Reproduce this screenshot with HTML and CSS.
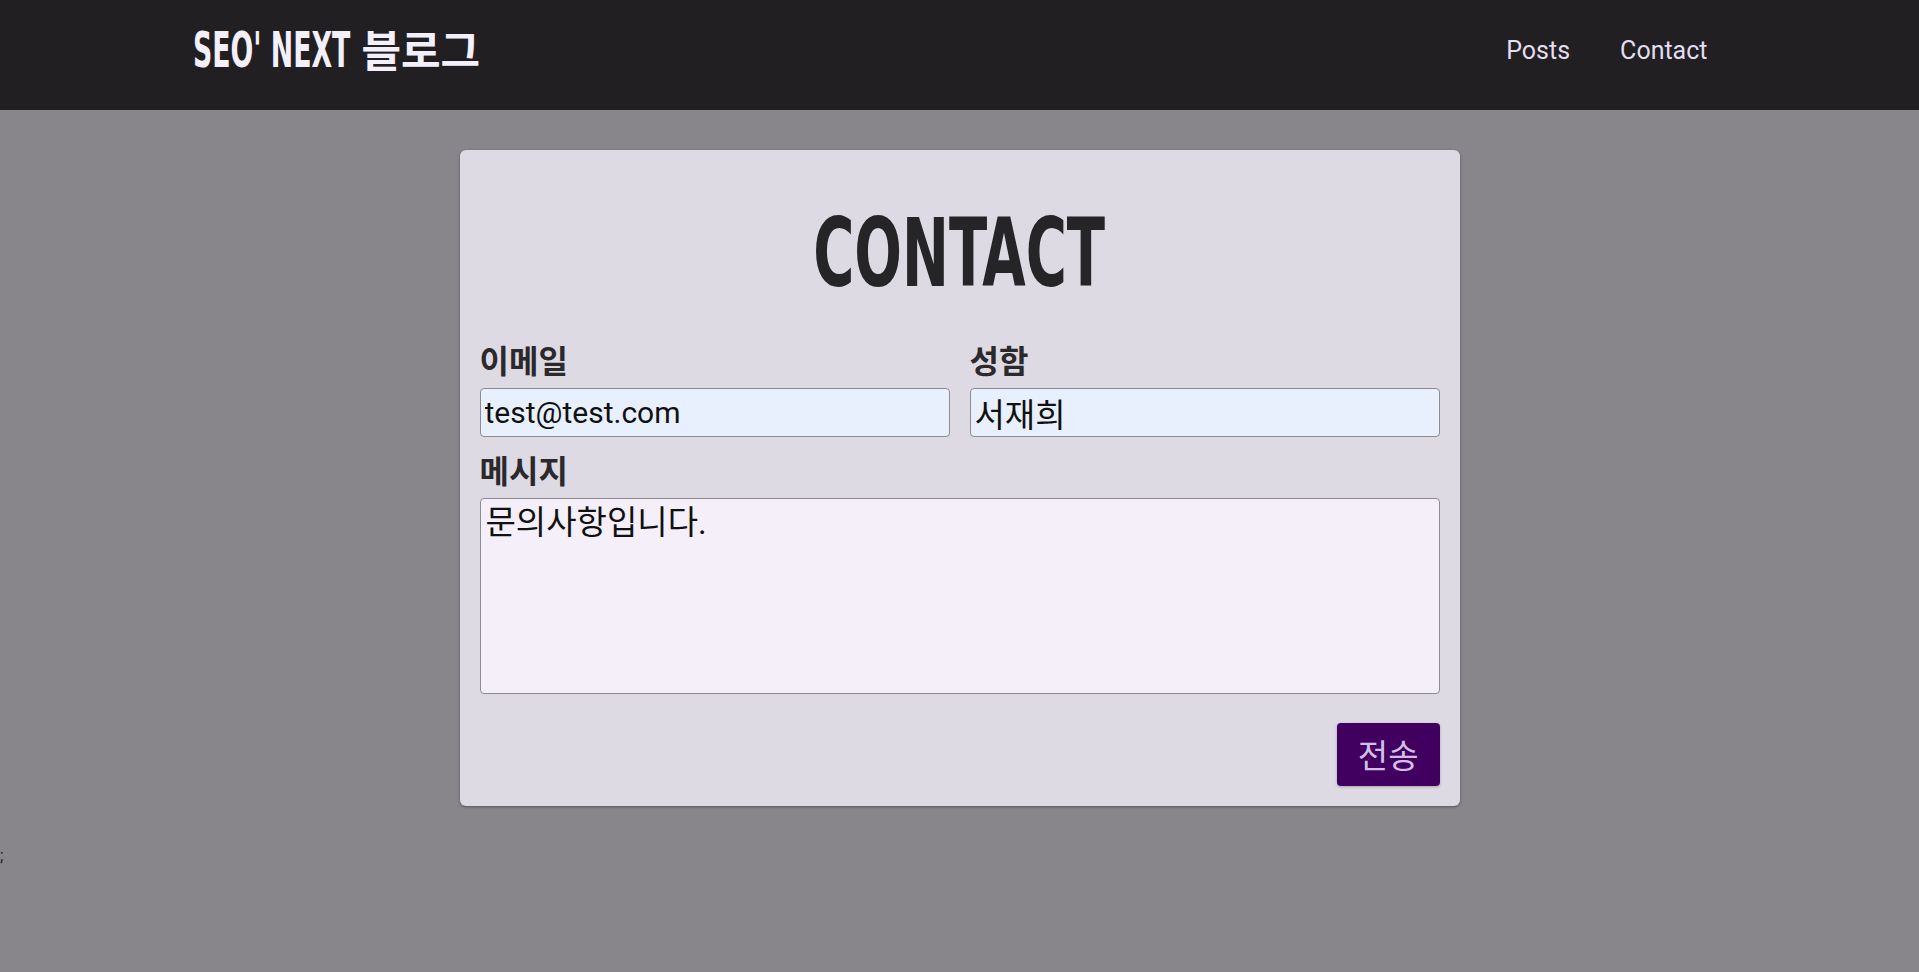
FILE: index.html
```html
<!DOCTYPE html>
<html lang="ko">
<head>
<meta charset="utf-8">
<title>Contact</title>
<link rel="stylesheet" href="styles.css">
</head>
<body>
<header class="site-header">
  <div class="header-inner">
    <a class="logo" href="#"><span class="logo-latin">SEO' NEXT</span><span class="logo-ko">블로그</span></a>
    <nav class="nav">
      <a class="nav-link" href="#">Posts</a>
      <a class="nav-link" href="#">Contact</a>
    </nav>
  </div>
</header>
<main class="main">
  <section class="card">
    <h1 class="title"><span class="title-text">CONTACT</span></h1>
    <form class="form">
      <div class="row">
        <div class="field">
          <label class="label" for="email">이메일</label>
          <input class="input" id="email" type="email" value="test@test.com">
        </div>
        <div class="field">
          <label class="label" for="name">성함</label>
          <input class="input input-ko" id="name" type="text" value="서재희">
        </div>
      </div>
      <div class="field">
        <label class="label" for="message">메시지</label>
        <textarea class="textarea" id="message">문의사항입니다.</textarea>
      </div>
      <div class="actions">
        <button class="button" type="button">전송</button>
      </div>
    </form>
  </section>
</main>
<div class="stray">;</div>
</body>
</html>
```
FILE: styles.css
```css
* { box-sizing: border-box; }
html, body { margin: 0; padding: 0; }
body {
  background: #88858b;
  font-family: Roboto, "Noto Sans CJK KR", sans-serif;
  color: #1f1d20;
  min-height: 972px;
}
.site-header {
  background: #211f22;
  height: 110px;
}
.header-inner {
  max-width: 1536px;
  margin: 0 auto;
  height: 100%;
  padding: 0 0 10px 0;
  display: flex;
  align-items: center;
  justify-content: space-between;
}
.logo {
  display: flex;
  align-items: baseline;
  color: #f4f0fb;
  text-decoration: none;
  white-space: nowrap;
}
.logo-latin {
  display: inline-block;
  width: 155px;
  font-family: "DejaVu Sans Condensed", "DejaVu Sans", sans-serif;
  font-stretch: condensed;
  font-weight: 700;
  font-size: 49px;
  line-height: 1;
  transform: scaleX(0.607);
  transform-origin: left center;
  margin-left: 1px;
}
.logo-ko {
  font-family: "Noto Sans CJK KR", sans-serif;
  font-weight: 700;
  font-size: 43px;
  line-height: 1;
  margin-left: 14px;
}
.nav {
  display: flex;
  gap: 10px;
}
.nav-link {
  color: #e2def0;
  text-decoration: none;
  font-size: 25px;
  padding: 0 20px;
}
.main {
  padding-top: 40px;
}
.card {
  width: 1000px;
  margin: 0 auto;
  background: #dddae4;
  border-radius: 6px;
  box-shadow: 0 1px 3px rgba(0,0,0,0.35);
  padding: 20px;
}
.title {
  margin: 37px 0 40px;
  text-align: center;
  font-family: "DejaVu Sans Condensed", "DejaVu Sans", sans-serif;
  font-stretch: condensed;
  font-weight: 700;
  font-size: 94px;
  line-height: 1;
  height: 94px;
  color: #252426;
}
.title-text {
  display: inline-block;
  transform: scaleX(0.663);
}
.form {
  display: flex;
  flex-direction: column;
  gap: 14px;
}
.row {
  display: grid;
  grid-template-columns: 1fr 1fr;
  column-gap: 20px;
}
.field {
  display: flex;
  flex-direction: column;
  gap: 10px;
}
.label {
  font-family: "Noto Sans CJK KR", sans-serif;
  font-weight: 700;
  font-size: 32px;
  line-height: 37px;
  color: #2b292c;
}
.input, .textarea {
  font-family: Roboto, "Noto Sans CJK KR", sans-serif;
  font-size: 30px;
  color: #111;
  border: 1px solid #8d8a90;
  border-radius: 4px;
  padding: 0 4px;
  width: 100%;
  margin: 0;
  outline: none;
}
.input {
  background: #e8f0fe;
  height: 49px;
}
.input-ko {
  font-size: 33px;
}
.textarea {
  background: #f4eff9;
  height: 196px;
  resize: none;
  display: block;
  font-size: 33px;
  line-height: 1.3;
  padding: 3px 5px;
}
.actions {
  display: flex;
  justify-content: flex-end;
  margin-top: 15px;
}
.button {
  background: #41005f;
  color: #d2bfe6;
  border: none;
  border-radius: 4px;
  font-family: "Noto Sans CJK KR", sans-serif;
  font-size: 33px;
  line-height: 41px;
  padding: 11px 21px;
  box-shadow: 0 1px 3px rgba(0,0,0,0.25);
}
.stray {
  margin-top: 40px;
  font-size: 16px;
  color: #1f1d20;
  line-height: 1.2;
}
```
